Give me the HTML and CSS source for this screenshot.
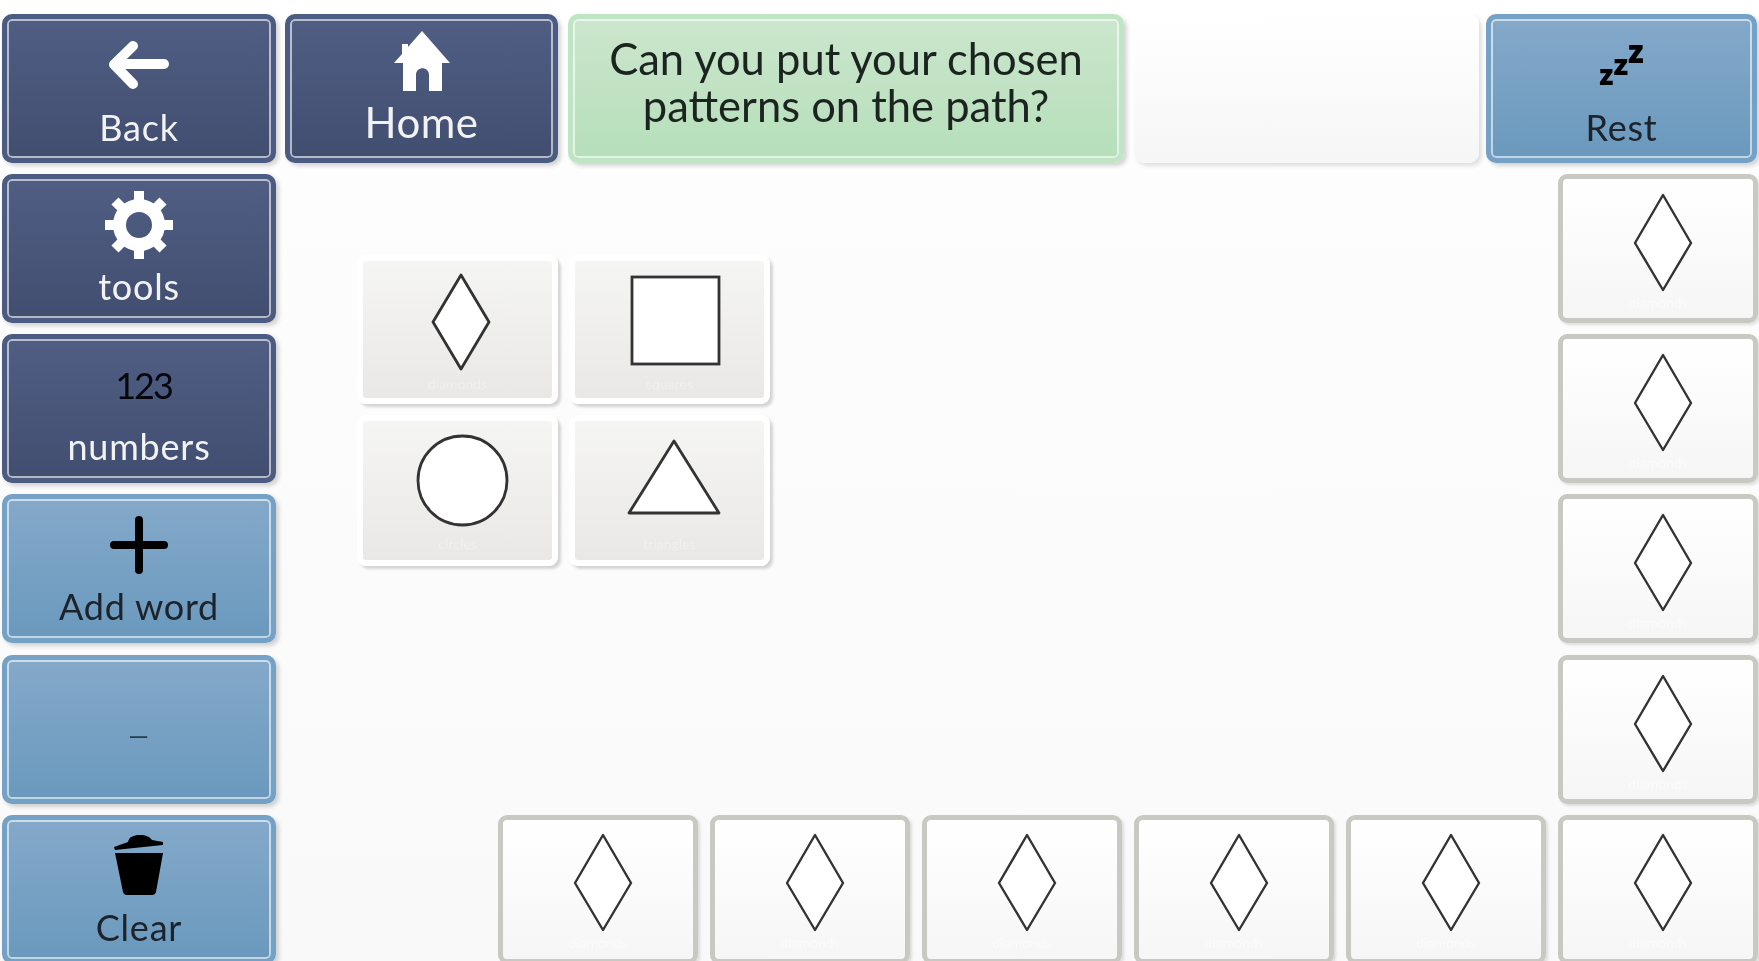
FILE: index.html
```html
<!DOCTYPE html>
<html lang="en">
<head>
  <meta charset="UTF-8">
  <title>Patterns on the path</title>
  <link rel="stylesheet" href="styles.css">
</head>
<body>

  <svg class="defs" width="0" height="0">
    <symbol id="diamond" viewBox="0 0 100 100">
      <polygon points="52,3 80,50 52,97 24,50" fill="#fff" stroke="#333" stroke-width="2.8" stroke-linejoin="round"/>
    </symbol>
    <symbol id="diamond-thin" viewBox="0 0 100 100">
      <polygon points="55,2 83,50 55,97 27,50" fill="#fff" stroke="#333" stroke-width="2.4" stroke-linejoin="round"/>
    </symbol>
  </svg>

  <div class="page">
    <div class="top-row">
      <div class="btn btn-dark btn-back">
        <div class="slot slot-top">
          <svg width="62" height="48" viewBox="0 0 62 48"><path d="M56 23H7M25 5L6 23.500L25 43" fill="none" stroke="#fff" stroke-width="10" stroke-linecap="round" stroke-linejoin="round"/></svg>
        </div>
        <span class="label">Back</span>
      </div>
      <div class="btn btn-dark btn-home">
        <div class="slot slot-short">
          <svg width="56" height="60" viewBox="0 0 56 60"><path d="M28 0L56 32H48V60H35V44C35 35 22 35 22 44V60H9V32H0L8 23V13H14V16Z" fill="#fff"/></svg>
        </div>
        <span class="label label-big">Home</span>
      </div>
      <div class="btn btn-green btn-question">
        <span class="question">Can you put your chosen<br>patterns on the path?</span>
      </div>
      <div class="blank"></div>
      <div class="btn btn-blue btn-rest">
        <div class="slot slot-top">
          <span class="zzz"><span class="z1">z</span><span class="z2">z</span><span class="z3">z</span></span>
        </div>
        <span class="label label-dark">Rest</span>
      </div>
    </div>

    <div class="main">
      <div class="side">
        <div class="btn btn-dark">
          <div class="slot">
            <svg width="70" height="70" viewBox="-35 -35 70 70">
              <circle r="19.500" fill="none" stroke="#fff" stroke-width="13"/>
              <g stroke="#fff" stroke-width="10">
                <line x1="0" y1="-22" x2="0" y2="-34"/>
                <line x1="0" y1="-22" x2="0" y2="-34" transform="rotate(45)"/>
                <line x1="0" y1="-22" x2="0" y2="-34" transform="rotate(90)"/>
                <line x1="0" y1="-22" x2="0" y2="-34" transform="rotate(135)"/>
                <line x1="0" y1="-22" x2="0" y2="-34" transform="rotate(180)"/>
                <line x1="0" y1="-22" x2="0" y2="-34" transform="rotate(225)"/>
                <line x1="0" y1="-22" x2="0" y2="-34" transform="rotate(270)"/>
                <line x1="0" y1="-22" x2="0" y2="-34" transform="rotate(315)"/>
              </g>
            </svg>
          </div>
          <span class="label">tools</span>
        </div>
        <div class="btn btn-dark">
          <div class="slot"><span class="digits">123</span></div>
          <span class="label">numbers</span>
        </div>
        <div class="btn btn-blue">
          <div class="slot">
            <svg width="58" height="58" viewBox="0 0 58 58"><path d="M29 4V54M4 29H54" stroke="#000" stroke-width="8" stroke-linecap="round"/></svg>
          </div>
          <span class="label label-dark">Add word</span>
        </div>
        <div class="btn btn-blue">
          <div class="slot"></div>
          <span class="label label-dark label-dash">—</span>
        </div>
        <div class="btn btn-blue">
          <div class="slot">
            <svg width="52" height="60" viewBox="0 0 52 60"><path d="M1 12L15 7C16 2 20 0 27 0C33 0 37 2 39 5L50 7V10L2 15ZM2 18H50L43 57Q42 60 39 60H14Q11 60 10 57Z" fill="#000"/></svg>
          </div>
          <span class="label label-dark">Clear</span>
        </div>
      </div>

      <div class="board">
        <div class="choices">
          <div class="tile tile-choice">
            <svg class="shape" viewBox="0 0 100 100"><use href="#diamond"/></svg>
            <span class="faint">diamonds</span>
          </div>
          <div class="tile tile-choice">
            <svg class="shape" viewBox="0 0 100 100"><rect x="11" y="5" width="87" height="87" fill="#fff" stroke="#333" stroke-width="2.800"/></svg>
            <span class="faint">squares</span>
          </div>
          <div class="tile tile-choice">
            <svg class="shape" viewBox="0 0 100 100"><circle cx="53.500" cy="48.500" r="44.500" fill="#fff" stroke="#333" stroke-width="2.800"/></svg>
            <span class="faint">circles</span>
          </div>
          <div class="tile tile-choice">
            <svg class="shape" viewBox="0 0 100 100"><polygon points="53,9 98,81 8,81" fill="#fff" stroke="#333" stroke-width="2.800" stroke-linejoin="round"/></svg>
            <span class="faint">triangles</span>
          </div>
        </div>

        <div class="tile tile-path col-7 row-1"><svg class="shape" viewBox="0 0 100 100"><use href="#diamond-thin"/></svg><span class="faint">diamonds</span></div>
        <div class="tile tile-path col-7 row-2"><svg class="shape" viewBox="0 0 100 100"><use href="#diamond-thin"/></svg><span class="faint">diamonds</span></div>
        <div class="tile tile-path col-7 row-3"><svg class="shape" viewBox="0 0 100 100"><use href="#diamond-thin"/></svg><span class="faint">diamonds</span></div>
        <div class="tile tile-path col-7 row-4"><svg class="shape" viewBox="0 0 100 100"><use href="#diamond-thin"/></svg><span class="faint">diamonds</span></div>

        <div class="tile tile-path col-2 row-5"><svg class="shape" viewBox="0 0 100 100"><use href="#diamond-thin"/></svg><span class="faint">diamonds</span></div>
        <div class="tile tile-path col-3 row-5"><svg class="shape" viewBox="0 0 100 100"><use href="#diamond-thin"/></svg><span class="faint">diamonds</span></div>
        <div class="tile tile-path col-4 row-5"><svg class="shape" viewBox="0 0 100 100"><use href="#diamond-thin"/></svg><span class="faint">diamonds</span></div>
        <div class="tile tile-path col-5 row-5"><svg class="shape" viewBox="0 0 100 100"><use href="#diamond-thin"/></svg><span class="faint">diamonds</span></div>
        <div class="tile tile-path col-6 row-5"><svg class="shape" viewBox="0 0 100 100"><use href="#diamond-thin"/></svg><span class="faint">diamonds</span></div>
        <div class="tile tile-path col-7 row-5"><svg class="shape" viewBox="0 0 100 100"><use href="#diamond-thin"/></svg><span class="faint">diamonds</span></div>
      </div>
    </div>
  </div>

</body>
</html>
```

FILE: styles.css
```css
html, body {
  margin: 0;
  padding: 0;
  height: 961px;
  overflow: hidden;
}
body {
  font-family: 'Lato', 'Open Sans', sans-serif;
  background: linear-gradient(#fff, #fdfdfd 20%, #f9f9f9);
}
.defs {
  position: absolute;
}
.page {
  padding: 14px 0 0 2px;
  filter: blur(0.5px);
}
.top-row {
  display: flex;
  height: 149px;
  margin-bottom: 11px;
}
.main {
  display: flex;
  gap: 10px;
}
.side {
  display: flex;
  flex-direction: column;
  gap: 11.2px;
  width: 274px;
}
.btn {
  box-sizing: border-box;
  height: 149px;
  border: 5px solid;
  border-radius: 10px;
  display: flex;
  flex-direction: column;
  align-items: center;
  box-shadow: inset 0 0 0 2px rgba(255, 255, 255, 0.6), 3px 3px 4px rgba(0, 0, 0, 0.17);
}
.btn-dark {
  border-color: #4b5b81;
  background: linear-gradient(#505e84, #414e70);
}
.btn-blue {
  border-color: #74a1c5;
  background: linear-gradient(#84a9ca, #6a99bd);
}
.btn-green {
  border-color: #bfe5c4;
  background: linear-gradient(#cbe6cd, #b6dfba);
}
.btn-back {
  width: 274px;
  margin-right: 9px;
}
.btn-home {
  width: 273px;
  margin-right: 10px;
}
.btn-question {
  width: 556px;
  margin-right: 10px;
}
.btn-rest {
  width: 271px;
}
.blank {
  box-sizing: border-box;
  width: 345px;
  margin-right: 7px;
  border-radius: 10px;
  background: linear-gradient(#fff, #f6f6f6);
  box-shadow: 3px 3px 4px rgba(0, 0, 0, 0.12);
}
.slot {
  height: 91px;
  flex: none;
  display: flex;
  align-items: center;
  justify-content: center;
}
.slot-top {
  height: 92px;
}
.slot-short {
  height: 84px;
}
.label {
  font-size: 36px;
  line-height: 32px;
  letter-spacing: 0.8px;
  color: #f2f2f2;
}
.label-big {
  font-size: 42px;
  line-height: 38px;
  letter-spacing: 0.5px;
}
.label-dark {
  color: #1d232b;
}
.label-dash {
  margin-top: -32px;
  font-size: 26px;
  color: #2b3a48;
}
.question {
  margin-top: 16px;
  font-size: 43.500px;
  line-height: 47px;
  text-align: center;
  color: #1c2420;
}
.digits {
  margin-left: 9px;
  font-size: 36px;
  letter-spacing: -2px;
  color: #05070c;
}
.zzz {
  display: flex;
  align-items: flex-end;
  margin-top: -6px;
  font-family: 'Open Sans', sans-serif;
  font-weight: 800;
  line-height: 1;
  color: #000;
}
.z1 {
  font-size: 28px;
}
.z2 {
  font-size: 29px;
  margin-bottom: 10px;
}
.z3 {
  font-size: 31px;
  margin-bottom: 21px;
}
.board {
  display: grid;
  grid-template-columns: repeat(7, 200px);
  grid-template-rows: repeat(5, 149px);
  column-gap: 12px;
  row-gap: 11.2px;
}
.choices {
  grid-column: 1 / 5;
  grid-row: 1 / 5;
  padding: 81px 0 0 71px;
  display: grid;
  grid-template-columns: repeat(2, 201px);
  grid-template-rows: 149px 151px;
  column-gap: 11px;
  row-gap: 11px;
}
.tile {
  box-sizing: border-box;
  border-radius: 9px;
  display: flex;
  flex-direction: column;
  align-items: center;
}
.tile-choice {
  padding-top: 11px;
  border: 6px solid #fff;
  background: linear-gradient(#f5f5f4, #e9e8e6);
  box-shadow: 3px 3px 3px rgba(0, 0, 0, 0.16);
}
.tile-choice .shape {
  margin-left: 3px;
}
.tile-path {
  height: 149px;
  padding-top: 14px;
  border: 5px solid #c9c9c4;
  background: linear-gradient(#fff, #f6f6f6);
  box-shadow: 2px 2px 3px rgba(0, 0, 0, 0.12);
}
.shape {
  width: 100px;
  height: 100px;
  flex: none;
}
.faint {
  margin-top: 2px;
  font-size: 14px;
  line-height: 20px;
  color: rgba(255, 255, 255, 0.3);
}
.tile-path .faint {
  margin-top: 0;
  color: rgba(255, 255, 255, 0.5);
}
.col-2 { grid-column: 2; }
.col-3 { grid-column: 3; }
.col-4 { grid-column: 4; }
.col-5 { grid-column: 5; }
.col-6 { grid-column: 6; }
.col-7 { grid-column: 7; }
.row-1 { grid-row: 1; }
.row-2 { grid-row: 2; }
.row-3 { grid-row: 3; }
.row-4 { grid-row: 4; }
.row-5 { grid-row: 5; padding-top: 13px; }
```
